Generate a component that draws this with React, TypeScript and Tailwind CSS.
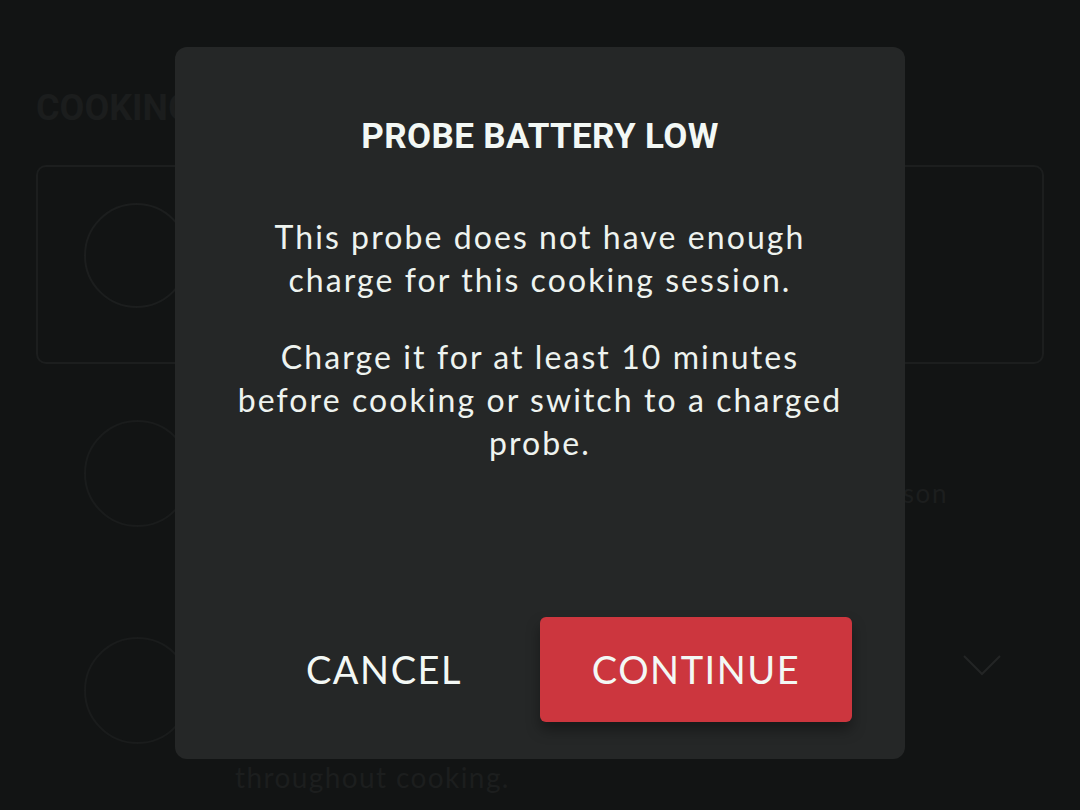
const body = "font-['Lato','Open_Sans',sans-serif]";

function Backdrop() {
	return (
		<div className="flex flex-col px-9 pt-[86px]">
			<h1 className="font-['Roboto',sans-serif] font-bold text-[36px] leading-[44px] text-[#1b1d1d]">
				COOKING SESSION
			</h1>
			<div className="mt-[35px] flex h-[199px] items-start rounded-[10px] border-2 border-[#1c1e1e] pl-[46px] pt-[36px]">
				<div className="h-[105px] w-[105px] rounded-full border-2 border-[#1c1e1e]" />
			</div>
			<div className="mt-[56px] flex items-center pl-[48px]">
				<div className="h-[107px] w-[107px] shrink-0 rounded-full border-2 border-[#1a1c1c]" />
				<p className={`${body} ml-auto mr-[96px] mt-[40px] text-[26px] tracking-[0.06em] text-[#1c1e1e]`}>
					Use one probe per season
				</p>
			</div>
			<div className="mt-[110px] flex items-center pl-[48px]">
				<div className="h-[107px] w-[107px] shrink-0 rounded-full border-2 border-[#1a1c1c]" />
				<svg viewBox="0 0 40 24" className="ml-auto mb-[50px] mr-[42px] h-[24px] w-[40px]" fill="none" stroke="#232525" strokeWidth="2">
					<polyline points="2,2 20,20 38,2" />
				</svg>
			</div>
			<p className={`${body} -mt-[27px] pl-[199px] text-[28px] leading-[40px] tracking-[0.05em] text-[#1c1e1e]`}>
				Keep the probe in the food and check it regularly
				<br />
				throughout cooking.
			</p>
		</div>
	);
}

function BatteryDialog() {
	return (
		<div className="absolute left-[175px] top-[47px] flex h-[712px] w-[730px] flex-col rounded-[12px] bg-[#252727] px-[53px] pb-[37px] pt-[70px] text-center">
			<h2 className="font-['Roboto',sans-serif] font-bold text-[35px] leading-[40px] tracking-[0.01em] text-[#f3f8f5]">
				PROBE BATTERY LOW
			</h2>
			<p className={`${body} mt-[58px] text-[32px] leading-[43px] tracking-[0.065em] text-[#eef3ef]`}>
				This probe does not have enough
				<br />
				charge for this cooking session.
			</p>
			<p className={`${body} mt-[34px] text-[32px] leading-[43px] tracking-[0.065em] text-[#eef3ef]`}>
				Charge it for at least 10 minutes
				<br />
				before cooking or switch to a charged
				<br />
				probe.
			</p>
			<div className="mt-auto flex h-[105px]">
				<button className={`${body} flex-1 text-[38px] tracking-[0.04em] text-[#f3f8f5]`}>
					CANCEL
				</button>
				<button className={`${body} flex-1 rounded-[6px] bg-[#cc363e] text-[38px] tracking-[0.04em] text-[#f3f8f5] shadow-[0_8px_14px_rgba(0,0,0,0.35)]`}>
					CONTINUE
				</button>
			</div>
		</div>
	);
}

export default function App() {
	return (
		<div className="relative h-[810px] w-[1080px] overflow-hidden bg-[#121414]">
			<Backdrop />
			<BatteryDialog />
		</div>
	);
}
